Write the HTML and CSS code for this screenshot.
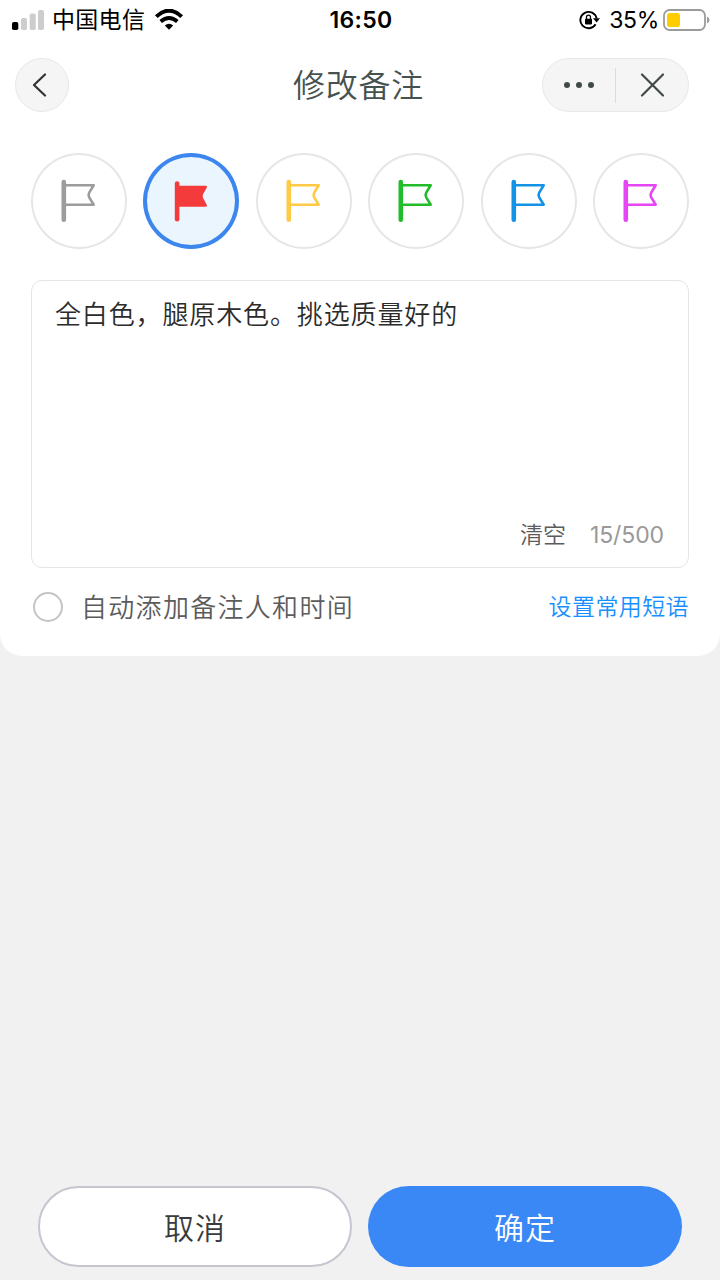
FILE: index.html
```html
<!DOCTYPE html>
<html lang="zh-CN">
<head>
  <meta charset="UTF-8">
  <meta name="viewport" content="width=device-width, initial-scale=1.0">
  <title>修改备注</title>
  <link rel="stylesheet" href="styles.css">
</head>
<body>
  <svg width="0" height="0" class="symbols">
    <symbol id="flag" viewBox="0 0 96 96">
      <path d="M32.8 29V66.7" fill="none" stroke="currentColor" stroke-width="4.6" stroke-linecap="round"/>
      <path d="M34 32.3H62.7L58.2 39.6Q57 42 58.2 44.4L62.7 51.7H34" fill="none" stroke="currentColor" stroke-width="2.6" stroke-linejoin="round"/>
    </symbol>
    <symbol id="flag-solid" viewBox="0 0 96 96">
      <path d="M34.1 30.5V66.2" fill="none" stroke="currentColor" stroke-width="4.6" stroke-linecap="round"/>
      <path d="M34 33.9H62.8L58.9 41Q58 43.2 58.9 45.4L62.8 52.5H34Z" fill="currentColor" stroke="currentColor" stroke-width="2.4" stroke-linejoin="round"/>
    </symbol>
  </svg>

  <div class="card">
    <div class="status-bar">
      <div class="status-left">
        <svg class="signal" width="32" height="21" viewBox="0 0 32 21">
          <rect x="0" y="12" width="6.3" height="8" rx="1.8" fill="#000"/>
          <rect x="9" y="8" width="6" height="12" rx="1.8" fill="#cdcdcd"/>
          <rect x="17.7" y="3.5" width="6" height="16.5" rx="1.8" fill="#cdcdcd"/>
          <rect x="26" y="0" width="6" height="20" rx="1.8" fill="#cdcdcd"/>
        </svg>
        <span class="carrier">中国电信</span>
        <svg class="wifi" width="30" height="22" viewBox="0 0 30 22">
          <path d="M2.3 7.6Q15-4.2 27.7 7.6" fill="none" stroke="#000" stroke-width="4"/>
          <path d="M6.7 12.5Q15 5.3 23.3 12.5" fill="none" stroke="#000" stroke-width="3.8"/>
          <path d="M10.8 16.6Q15 12.8 19.2 16.6L15 20.8Z" fill="#000"/>
        </svg>
      </div>
      <span class="clock">16:50</span>
      <div class="status-right">
        <svg width="21" height="20" viewBox="0 0 21 20">
          <path d="M16.6 14.3A8.2 8.2 0 1 1 17.6 8.5" fill="none" stroke="#000" stroke-width="1.9"/>
          <path d="M14 8.2H21L17.6 12.6Z" fill="#000"/>
          <rect x="6" y="8.8" width="7" height="5.6" rx="0.8" fill="#000"/>
          <path d="M7.5 9V7.2A2 2 0 0 1 11.5 7.2V9" fill="none" stroke="#000" stroke-width="1.3"/>
        </svg>
        <span class="percent">35%</span>
        <svg width="47" height="22" viewBox="0 0 47 22">
          <rect x="1" y="1" width="41" height="20" rx="5.5" fill="#fff" stroke="#9b9b9b" stroke-width="1.8"/>
          <rect x="4" y="4" width="13" height="14" rx="2.8" fill="#fc0"/>
          <path d="M44 7.5Q46.5 8.5 46.5 11T44 14.5Z" fill="#9b9b9b"/>
        </svg>
      </div>
    </div>

    <header class="nav">
      <button class="back">
        <svg width="16" height="24" viewBox="0 0 16 24">
          <path d="M13 1.5L2 12L13 22.5" fill="none" stroke="#333" stroke-width="2.2" stroke-linecap="round" stroke-linejoin="round"/>
        </svg>
      </button>
      <h1>修改备注</h1>
      <div class="capsule">
        <button>
          <svg width="30" height="6" viewBox="0 0 30 6" fill="#404b49">
            <circle cx="3" cy="3" r="3"/>
            <circle cx="15" cy="3" r="3"/>
            <circle cx="27" cy="3" r="3"/>
          </svg>
        </button>
        <i class="capsule-line"></i>
        <button>
          <svg width="24" height="24" viewBox="0 0 24 24">
            <path d="M2 1.5L23 22.5M23 1.5L2 22.5" stroke="#404b49" stroke-width="2.2" stroke-linecap="round"/>
          </svg>
        </button>
      </div>
    </header>

    <div class="flags">
      <button class="flag gray"><svg><use href="#flag"/></svg></button>
      <button class="flag red active"><svg><use href="#flag-solid"/></svg></button>
      <button class="flag yellow"><svg><use href="#flag"/></svg></button>
      <button class="flag green"><svg><use href="#flag"/></svg></button>
      <button class="flag blue"><svg><use href="#flag"/></svg></button>
      <button class="flag pink"><svg><use href="#flag"/></svg></button>
    </div>

    <div class="note">
      <p class="note-text">全白色，腿原木色。挑选质量好的</p>
      <div class="note-footer">
        <span class="clear">清空</span>
        <span class="count">15/500</span>
      </div>
    </div>

    <div class="options">
      <label class="auto-add"><span class="radio"></span><span class="auto-text">自动添加备注人和时间</span></label>
      <a class="phrases">设置常用短语</a>
    </div>
  </div>

  <footer class="actions">
    <button class="btn cancel">取消</button>
    <button class="btn confirm">确定</button>
  </footer>
</body>
</html>
```

FILE: styles.css
```css
* {
  box-sizing: border-box;
}

body {
  margin: 0;
  height: 1280px;
  display: flex;
  flex-direction: column;
  justify-content: space-between;
  background: #f1f1f1;
  font-family: Inter, "Noto Sans CJK SC", sans-serif;
  font-weight: 350;
  overflow: hidden;
}

button {
  padding: 0;
  border: none;
  background: none;
  font-family: inherit;
  font-weight: inherit;
  cursor: pointer;
}

svg {
  display: block;
}

.symbols {
  position: absolute;
}

.card {
  height: 656px;
  background: #fff;
  border-radius: 0 0 22px 22px;
}

/* status bar */
.status-bar {
  height: 40px;
  padding: 0 10px 0 12px;
  display: grid;
  grid-template-columns: 1fr auto 1fr;
  align-items: center;
  color: #000;
}

.status-left, .status-right {
  display: flex;
  align-items: center;
}

.status-right {
  height: 38px;
  justify-content: flex-end;
}

.carrier {
  margin: 0 9px 0 8px;
  padding-top: 1px;
  font-size: 23px;
  font-weight: 400;
  letter-spacing: 0.3px;
  line-height: 39px;
}

.clock {
  font-size: 23px;
  font-weight: 600;
  letter-spacing: 0.3px;
}

.percent {
  margin: 0 4px 0 9px;
  font-size: 23px;
  font-weight: 400;
  letter-spacing: -0.3px;
}

/* title bar */
.nav {
  height: 90px;
  padding: 0 31px 0 15px;
  display: flex;
  justify-content: space-between;
  align-items: center;
}

.nav h1 {
  margin: 0 0 4px 106px;
  font-size: 32px;
  font-weight: inherit;
  letter-spacing: 0.7px;
  color: #46524f;
}

.back, .capsule {
  height: 54px;
  border: 1px solid #e8e8e8;
  border-radius: 27px;
  background: #f5f5f5;
}

.back {
  width: 54px;
  padding-left: 16px;
}

.capsule {
  width: 147px;
  display: flex;
  align-items: center;
}

.capsule button {
  flex: 1;
  display: flex;
  justify-content: center;
}

.capsule-line {
  width: 1px;
  height: 35px;
  background: #dcdcdc;
}

/* flags */
.flags {
  margin: 23px 31px 0;
  display: flex;
  justify-content: space-between;
}

.flag {
  width: 96px;
  height: 96px;
  border-radius: 50%;
  box-shadow: inset 0 0 0 2px #e6e6e6;
}

.flag svg {
  width: 96px;
  height: 96px;
}

.flag.active {
  background: #eaf5fe;
  box-shadow: inset 0 0 0 4px #3c86ed;
}

.gray { color: #9c9c9c; }
.red { color: #f43b3b; }
.yellow { color: #ffca45; }
.green { color: #22bb2a; }
.blue { color: #1492e6; }
.pink { color: #e645f5; }

/* note box */
.note {
  height: 288px;
  margin: 31px 31px 0;
  padding: 15px 24px 15px 23px;
  display: flex;
  flex-direction: column;
  justify-content: space-between;
  border: 1px solid #e5e5e8;
  border-radius: 11px;
}

.note-text {
  margin: 0;
  font-size: 26px;
  letter-spacing: 0.87px;
  line-height: 38px;
  color: #2b2b2b;
}

.note-footer {
  display: flex;
  justify-content: flex-end;
  align-items: center;
  gap: 24px;
  font-size: 23px;
  line-height: 34px;
}

.clear {
  color: #5c5c5c;
}

.count {
  font-weight: 400;
  letter-spacing: -0.1px;
  color: #999;
}

.options {
  margin: 19px 31px 0 33px;
  display: flex;
  justify-content: space-between;
  align-items: center;
  line-height: 40px;
}

.auto-add {
  display: flex;
  align-items: center;
  gap: 18px;
  font-size: 26px;
  letter-spacing: 1.3px;
  color: #5c5c5c;
}

.auto-text {
  height: 38px;
}

.radio {
  width: 30px;
  height: 30px;
  margin-bottom: 1px;
  border: 2px solid #c4c4c4;
  border-radius: 50%;
}

.phrases {
  font-size: 23px;
  letter-spacing: 0.4px;
  color: #1890ff;
}

/* bottom buttons */
.actions {
  padding: 0 38px 13px;
  display: flex;
  justify-content: space-between;
}

.btn {
  width: 314px;
  height: 81px;
  padding-bottom: 2px;
  border-radius: 41px;
  font-size: 30px;
  letter-spacing: 1px;
}

.cancel {
  background: #fff;
  border: 2px solid #c5c6d0;
  color: #3a3b3e;
}

.confirm {
  background: #3a88f6;
  color: #fff;
}
```
